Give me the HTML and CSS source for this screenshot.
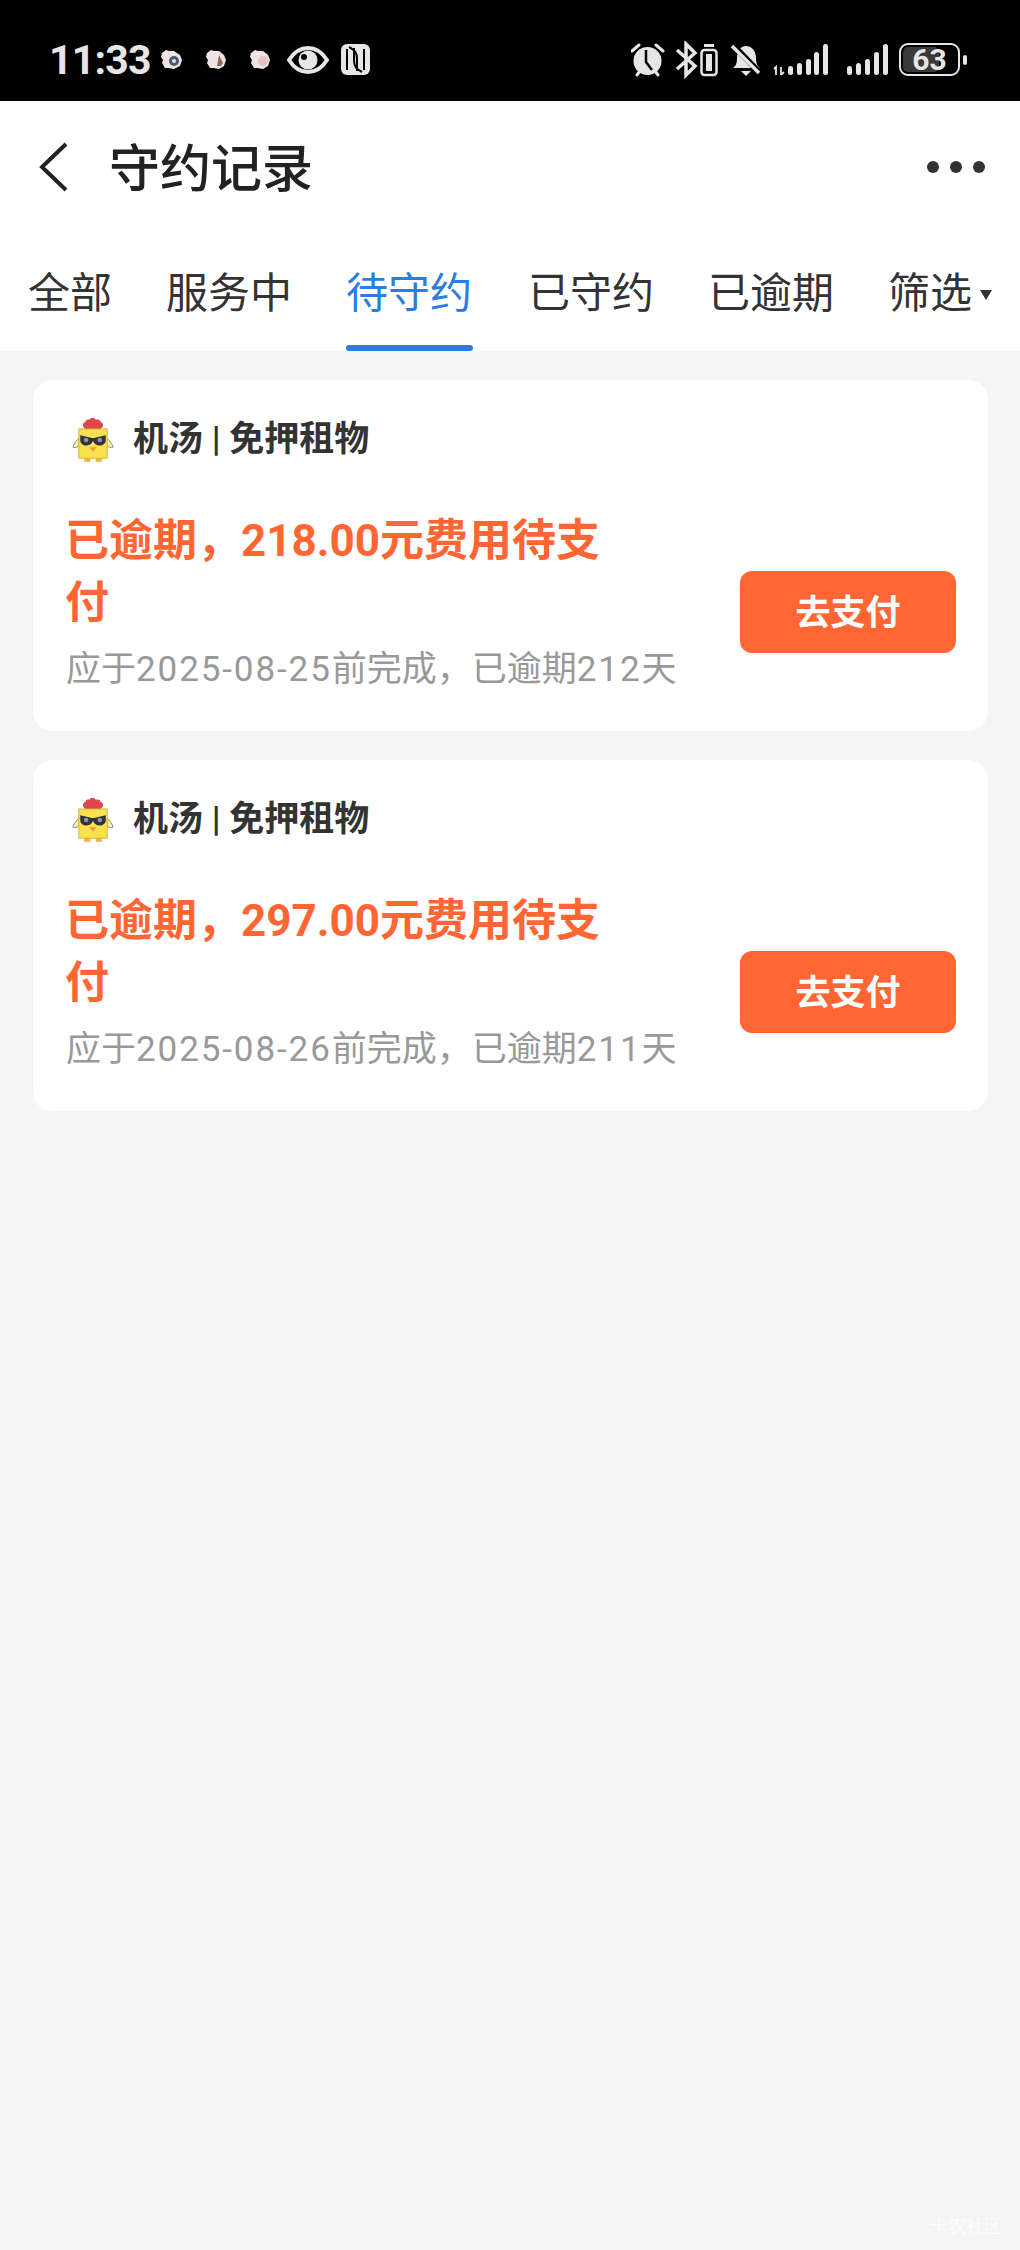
FILE: index.html
```html
<!DOCTYPE html>
<html lang="zh-CN">
<head>
    <meta charset="UTF-8">
    <meta name="viewport" content="width=device-width, initial-scale=1.0">
    <title>守约记录</title>
    <link rel="stylesheet" href="styles.css">
</head>
<body>
    <svg class="defs" width="0" height="0">
        <symbol id="chick" viewBox="0 0 46 52">
            <path d="M15 15c-4-2-4-7 0-8 0-2 2-3 4-2 1-3 6-3 7 0 3-1 5 0 5 2 4 1 4 6 0 8z" fill="#e0474c"/>
            <path d="M8 25c-3 2-6 6-7 10 3 1 5 0 7-2z" fill="#fbeeb0" stroke="#8a8a5c"/>
            <path d="M38 25c3 2 6 6 7 10-3 1-5 0-7-2z" fill="#fbeeb0" stroke="#8a8a5c"/>
            <path d="M14 46h6v5h-7zM26 46h6l1 5h-7z" fill="#f3b13c"/>
            <rect x="7.500" y="15" width="31" height="32" fill="#fbe14e" stroke="#c9b23e"/>
            <path d="M9 22l13 3h2l13-3v5c0 4-3 6-7 6s-6-2-7-5c-1 3-3 5-7 5s-7-2-7-6z" fill="#33333b"/>
            <circle cx="15.500" cy="27" r="2.500" fill="#8d94a6"/>
            <circle cx="30.500" cy="27" r="2.500" fill="#8d94a6"/>
            <path d="M19 35h8l-4 5z" fill="#f09a3a"/>
        </symbol>
    </svg>

    <div class="status-bar">
        <div class="status-left">
            <span class="time">11:33</span>
            <svg width="215" height="38" viewBox="158 40 215 38">
                <path d="M162 52l4-3 3 1 5 0 6 4 2 5-2 6-6 3-6-1-3 0-3-5 1-3-2-3z" fill="#efe3e3"/>
                <circle cx="174" cy="60" r="5" fill="#4a5a70"/>
                <circle cx="174" cy="60" r="2" fill="#dfe6ef"/>
                <path d="M207 52l4-3 3 1 5 0 5 4 2 5-2 6-5 3-6-1-3 0-3-5 1-3-2-3z" fill="#efe3e3"/>
                <path d="M219 54l4 8-2 3-4 0z" fill="#8b6a5c"/>
                <path d="M251 52l4-3 3 1 5 0 5 4 2 5-2 6-5 3-6-1-3 0-3-5 1-3-2-3z" fill="#efe3e3"/>
                <circle cx="263" cy="60" r="5" fill="#e2c4bd"/>
                <path d="M289 59c5-8 11-12 19-12s14 4 19 12c-5 8-11 12-19 12s-14-4-19-12z" fill="none" stroke="#e6e6e6" stroke-width="4"/>
                <circle cx="308" cy="59" r="9.500" fill="#e6e6e6"/>
                <circle cx="304" cy="56" r="3" fill="#000"/>
                <rect x="341" y="43" width="29" height="31" rx="6" fill="#e6e6e6"/>
                <path d="M347 48v21M364 48v21" stroke="#000" stroke-width="2"/>
                <path d="M349 46c6 3 8 6 8 12v12M362 71c-6-3-8-6-8-12V47" fill="none" stroke="#000" stroke-width="2"/>
            </svg>
        </div>
        <div class="status-right">
            <svg width="258" height="38" viewBox="631 40 258 38">
                <!-- alarm -->
                <circle cx="647.500" cy="60" r="14" fill="#e6e6e6"/>
                <path d="M632 50l7-6M663 50l-7-6M637 74l3-4M658 74l-3-4" stroke="#e6e6e6" stroke-width="3" stroke-linecap="round"/>
                <path d="M646 49v12l6 8" fill="none" stroke="#000" stroke-width="2.500"/>
                <!-- bluetooth + x -->
                <path d="M677 49l18 16-9 9V43l9 9-18 16" fill="none" stroke="#e6e6e6" stroke-width="3.500"/>
                <!-- battery saver -->
                <rect x="701.500" y="49" width="15" height="25" rx="3" fill="none" stroke="#e6e6e6" stroke-width="2.500"/>
                <rect x="706" y="53" width="6" height="17" fill="#e6e6e6"/>
                <rect x="704" y="43" width="10" height="3" fill="#e6e6e6"/>
                <!-- muted bell -->
                <path d="M733 67c3-2 4-5 4-10 0-7 3-12 9-12s10 5 10 12c0 5 1 8 4 10z" fill="#e6e6e6"/>
                <path d="M741 70h10l-5 5z" fill="#e6e6e6"/>
                <path d="M733 44l27 28" stroke="#000" stroke-width="6"/>
                <path d="M732 45l27 27" stroke="#e6e6e6" stroke-width="3.500"/>
                <!-- signal 1 -->
                <path d="M774 68l2-2v8M781 66v8M781 74l3-3" fill="none" stroke="#e6e6e6" stroke-width="1.800"/>
                <g fill="#e6e6e6">
                    <rect x="788" y="65" width="5" height="9" rx="2.500"/>
                    <rect x="797" y="62" width="5" height="12" rx="2.500"/>
                    <rect x="806" y="58" width="5" height="16" rx="2.500"/>
                    <rect x="814" y="51" width="5" height="23" rx="2.500"/>
                    <rect x="823" y="43" width="5" height="31" rx="2.500"/>
                    <!-- signal 2 -->
                    <rect x="847" y="65" width="5" height="9" rx="2.500"/>
                    <rect x="856" y="62" width="5" height="12" rx="2.500"/>
                    <rect x="865" y="58" width="5" height="16" rx="2.500"/>
                    <rect x="874" y="51" width="5" height="23" rx="2.500"/>
                    <rect x="883" y="43" width="5" height="31" rx="2.500"/>
                </g>
            </svg>
            <div class="battery">
                <div class="battery-body">
                    <div class="battery-fill"></div>
                    <span class="battery-num">63</span>
                </div>
                <div class="battery-nub"></div>
            </div>
        </div>
    </div>

    <header class="nav">
        <svg class="back" width="30" height="50" viewBox="0 0 30 50">
            <path d="M28 2L4 25l24 23" fill="none" stroke="#222" stroke-width="4"/>
        </svg>
        <h1 class="nav-title">守约记录</h1>
        <div class="more">
            <span class="dot"></span>
            <span class="dot"></span>
            <span class="dot"></span>
        </div>
    </header>

    <nav class="tabs">
        <a class="tab">全部</a>
        <a class="tab">服务中</a>
        <a class="tab tab-active">待守约</a>
        <a class="tab">已守约</a>
        <a class="tab">已逾期</a>
        <a class="tab tab-filter">筛选<span class="caret"></span></a>
    </nav>

    <main class="list">
        <section class="card">
            <div class="card-head">
                <svg class="chick" width="42" height="48"><use href="#chick"/></svg>
                <span class="shop">机汤 | 免押租物</span>
            </div>
            <div class="card-body">
                <div class="info">
                    <div class="warn">已逾期，218.00元费用待支付</div>
                    <div class="due">应于<span class="num">2025-08-25</span>前完成，已逾期<span class="num">212</span>天</div>
                </div>
                <button class="pay">去支付</button>
            </div>
        </section>

        <section class="card">
            <div class="card-head">
                <svg class="chick" width="42" height="48"><use href="#chick"/></svg>
                <span class="shop">机汤 | 免押租物</span>
            </div>
            <div class="card-body">
                <div class="info">
                    <div class="warn">已逾期，297.00元费用待支付</div>
                    <div class="due">应于<span class="num">2025-08-26</span>前完成，已逾期<span class="num">211</span>天</div>
                </div>
                <button class="pay">去支付</button>
            </div>
        </section>
    </main>

    <div class="watermark">卡农社区</div>
</body>
</html>
```

FILE: styles.css
```css
* {
    box-sizing: border-box;
}

html, body {
    height: 100%;
}

body {
    position: relative;
    margin: 0;
    padding: 0;
    background-color: #f5f5f5;
    font-family: Roboto, "Noto Sans CJK SC", sans-serif;
    overflow: hidden;
}

.defs {
    position: absolute;
}

/* status bar */
.status-bar {
    display: flex;
    justify-content: space-between;
    align-items: center;
    height: 101px;
    padding: 18px 53px 0 49px;
    background-color: #000;
    color: #e6e6e6;
}

.status-left, .status-right {
    display: flex;
    align-items: center;
}

.status-left {
    gap: 7px;
}

.status-right {
    gap: 10px;
}

.time {
    font-size: 41px;
    font-weight: 700;
    letter-spacing: -0.8px;
}

.battery {
    display: flex;
    align-items: center;
    gap: 3px;
}

.battery-body {
    position: relative;
    display: flex;
    align-items: center;
    justify-content: center;
    width: 61px;
    height: 33px;
    border: 2.500px solid #e6e6e6;
    border-radius: 9px;
    overflow: hidden;
}

.battery-fill {
    position: absolute;
    left: 2px;
    top: 2px;
    bottom: 2px;
    width: 63%;
    background-color: #3a3a3a;
    border-radius: 5px;
}

.battery-num {
    position: relative;
    font-size: 30px;
    font-weight: 700;
    line-height: 1;
}

.battery-nub {
    width: 4px;
    height: 10px;
    background-color: #e6e6e6;
    border-radius: 2px;
}

/* nav */
.nav {
    display: flex;
    align-items: center;
    height: 132px;
    padding: 0 35px 0 38px;
    background-color: #fff;
}

.back {
    flex: none;
}

.nav-title {
    flex: 1;
    margin: -4px 0 0 41px;
    font-size: 51px;
    font-weight: 500;
    color: #222;
}

.more {
    display: flex;
    gap: 11px;
}

.dot {
    width: 12px;
    height: 12px;
    border-radius: 50%;
    background-color: #333;
}

/* tabs */
.tabs {
    display: flex;
    align-items: flex-start;
    gap: 54px;
    height: 118px;
    padding: 30px 0 0 28px;
    background-color: #fff;
}

.tab {
    position: relative;
    font-size: 42px;
    line-height: 62px;
    color: #333;
}

.tab-active {
    margin-right: 2px;
    color: #2a7de1;
}

.tab-active::after {
    content: "";
    position: absolute;
    left: 0;
    right: -1px;
    top: 82px;
    height: 6px;
    border-radius: 3px;
    background-color: #2a7de1;
}

.tab-filter {
    display: flex;
    align-items: center;
}

.caret {
    width: 0;
    height: 0;
    margin: 2px 0 0 8px;
    border-left: 6.500px solid transparent;
    border-right: 6.500px solid transparent;
    border-top: 10px solid #333;
}

/* cards */
.list {
    display: flex;
    flex-direction: column;
    gap: 29px;
    padding: 29px 32px 0 33px;
}

.card {
    height: 351px;
    padding: 27px 32px 0 33px;
    background-color: #fff;
    border-radius: 20px;
}

.card-head {
    display: flex;
    align-items: center;
    height: 56px;
}

.chick {
    flex: none;
    margin: 7px 19px 0 6px;
}

.shop {
    font-size: 35px;
    font-weight: 700;
    color: #333;
}

.card-body {
    display: flex;
    justify-content: space-between;
    align-items: center;
    margin-top: 47px;
}

.info {
    width: 640px;
}

.warn {
    max-width: 560px;
    margin-left: -1px;
    font-size: 44px;
    font-weight: 700;
    line-height: 62px;
    color: #ff6633;
}

.due {
    margin-top: 5px;
    font-size: 35px;
    line-height: 62px;
    color: #999;
    white-space: nowrap;
}

.num {
    letter-spacing: 1.900px;
}

.pay {
    flex: none;
    width: 216px;
    height: 82px;
    margin-top: 13px;
    padding: 0 0 5px;
    border: 0;
    border-radius: 12px;
    background-color: #ff6633;
    color: #fff;
    font-family: inherit;
    font-size: 35px;
    font-weight: 700;
}

.watermark {
    position: absolute;
    left: 930px;
    top: 2212px;
    font-size: 18px;
    color: #fdfdfd;
}
```
